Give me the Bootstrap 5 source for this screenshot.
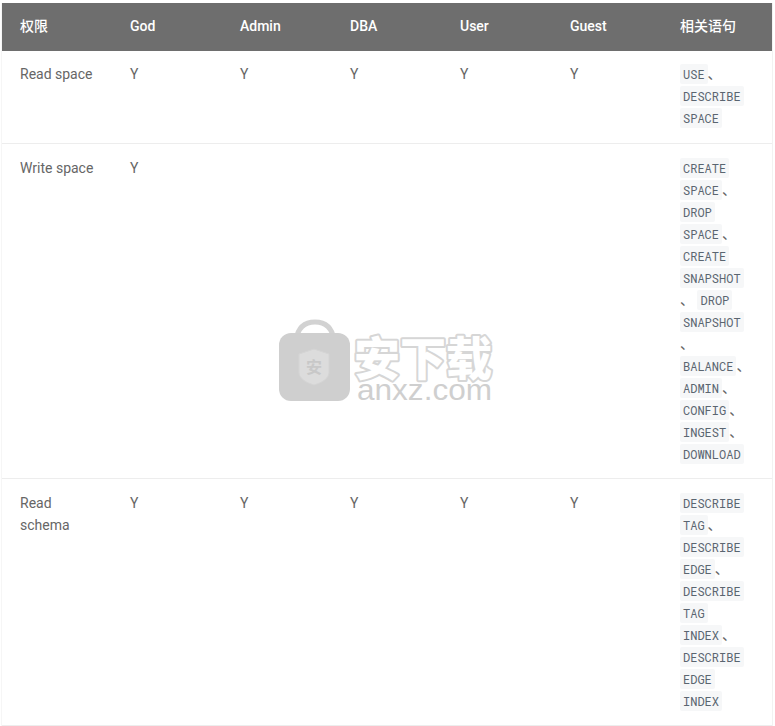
<!DOCTYPE html>
<html lang="zh">
<head>
<meta charset="utf-8">
<title>权限</title>
<link href="https://cdn.jsdelivr.net/npm/bootstrap@5.3.0/dist/css/bootstrap.min.css" rel="stylesheet">
<style>
body{margin:0;background:#fff;font-family:Roboto,"Noto Sans CJK SC",sans-serif;font-size:14px;color:#666;overflow:hidden}
.sheet{position:relative;padding:3px 0 0 1px;height:726px}
.frame{width:772px;border-left:1px solid #f6f6f6;border-right:1px solid #f2f2f2}
.perm-table{table-layout:fixed;width:770px;margin:0;border-collapse:separate;border-spacing:0}
.perm-table th{background:#6e6e6e;color:#fff;font-weight:500;padding:0 18px 2px;height:48px;line-height:22px;vertical-align:middle;border:0;box-shadow:none}
.perm-table td{padding:13px 0 13px 18px;line-height:22px;vertical-align:top;border:0;border-bottom:1px solid #ededed;color:#666;box-shadow:none;background:#fff;white-space:nowrap}
.perm-table tbody tr:first-child td{padding-top:12px;padding-bottom:14px}
.perm-table td.wraps{white-space:normal;padding-right:40px}
.perm-table td code{font-family:"Roboto Mono","Liberation Mono",monospace;font-size:12px;color:#5a6570;background:#f6f7f8;padding:2px 3px;border-radius:2px}
.stamp{position:absolute;left:276px;top:318px;pointer-events:none}
</style>
</head>
<body>
<div class="sheet">
<div class="frame">
<table class="table perm-table">
<thead>
<tr><th>权限</th><th>God</th><th>Admin</th><th>DBA</th><th>User</th><th>Guest</th><th>相关语句</th></tr>
</thead>
<tbody>
<tr><td>Read space</td><td>Y</td><td>Y</td><td>Y</td><td>Y</td><td>Y</td>
<td><code>USE</code>、<br><code>DESCRIBE</code><br><code>SPACE</code></td></tr>
<tr><td>Write space</td><td>Y</td><td></td><td></td><td></td><td></td>
<td><code>CREATE</code><br><code>SPACE</code>、<br><code>DROP</code><br><code>SPACE</code>、<br><code>CREATE</code><br><code>SNAPSHOT</code><br>、 <code>DROP</code><br><code>SNAPSHOT</code><br>、<br><code>BALANCE</code>、<br><code>ADMIN</code>、<br><code>CONFIG</code>、<br><code>INGEST</code>、<br><code>DOWNLOAD</code></td></tr>
<tr><td class="wraps">Read schema</td><td>Y</td><td>Y</td><td>Y</td><td>Y</td><td>Y</td>
<td><code>DESCRIBE</code><br><code>TAG</code>、<br><code>DESCRIBE</code><br><code>EDGE</code>、<br><code>DESCRIBE</code><br><code>TAG</code><br><code>INDEX</code>、<br><code>DESCRIBE</code><br><code>EDGE</code><br><code>INDEX</code></td></tr>
</tbody>
</table>
</div>
<svg class="stamp" width="222" height="90" viewBox="0 0 222 90" aria-hidden="true">
<path d="M20 22C22 9 29 4 39 4C49 4 56 9 58 22" fill="none" stroke="#d2d2d2" stroke-width="5"/>
<rect x="3" y="15" width="71" height="68" rx="12" fill="#cfcfcf"/>
<path d="M23 36L38 31L53 36V55C53 60 46 65 38 67C30 65 23 60 23 55Z" fill="#dcdcdc" stroke="#d4d4d4"/>
<text x="38" y="55" text-anchor="middle" font-family="'Noto Sans CJK SC',sans-serif" font-size="16" font-weight="700" fill="#c8c8c8">安</text>
<text x="78" y="57" font-family="'Noto Sans CJK SC',sans-serif" font-size="46" font-weight="900" fill="#fff" stroke="#d6d6d6" stroke-width="4" stroke-linejoin="round" paint-order="stroke" textLength="138" lengthAdjust="spacingAndGlyphs">安下载</text>
<text x="81" y="82" font-family="'Liberation Sans',sans-serif" font-size="29" fill="#cfcfcf" textLength="135" lengthAdjust="spacingAndGlyphs">anxz.com</text>
</svg>
</div>
<script src="https://cdn.jsdelivr.net/npm/bootstrap@5.3.0/dist/js/bootstrap.bundle.min.js"></script>
</body>
</html>
